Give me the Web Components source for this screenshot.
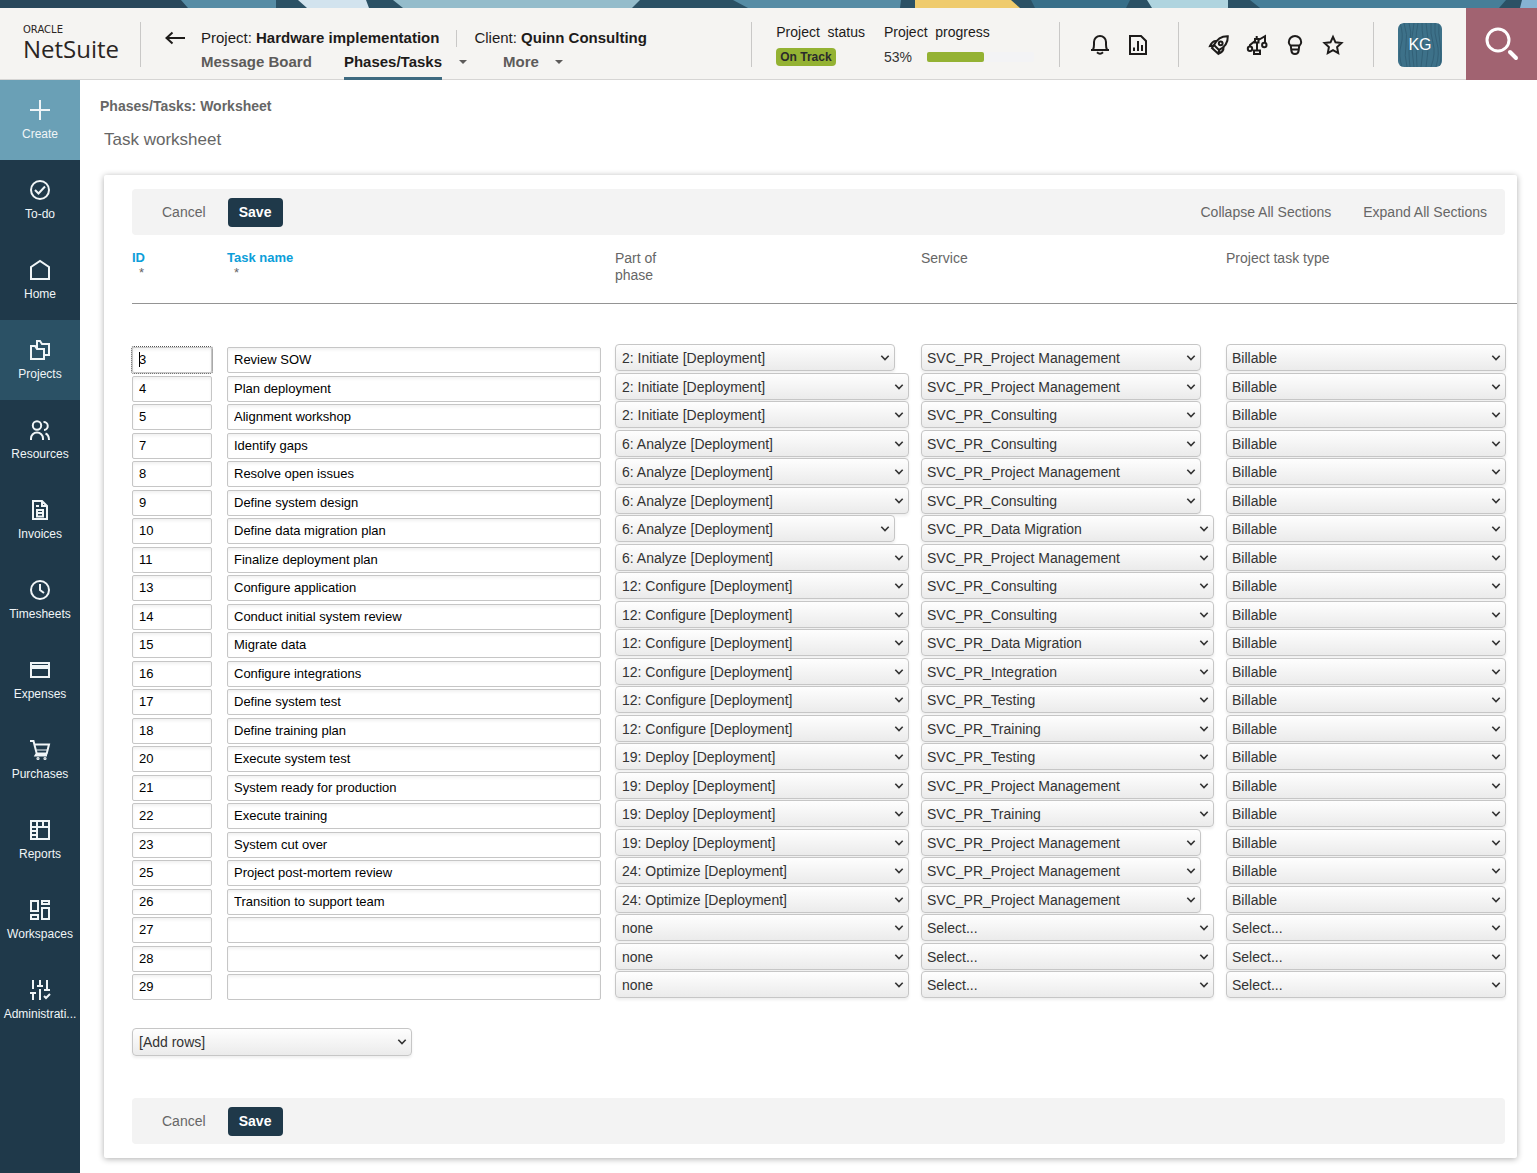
<!DOCTYPE html>
<html lang="en">
<head>
<meta charset="utf-8">
<meta name="viewport" content="width=device-width, initial-scale=1">
<title>Task worksheet</title>
<style>
  html, body { margin: 0; background: #fff; }
  body { font-family: "Liberation Sans", Arial, sans-serif; font-size: 14px; line-height: 17px; color: #666; }
</style>
</head>
<body>
<app-shell>
  <top-bar slot="header"></top-bar>
  <side-nav slot="nav"></side-nav>
  <worksheet-page></worksheet-page>
</app-shell>

<script>
const define = (name, html, setup) => {
  const template = document.createElement('template');
  template.innerHTML = html;
  customElements.define(name, class extends HTMLElement {
    connectedCallback() {
      if (this.shadowRoot) return;
      const root = this.attachShadow({ mode: 'open' });
      root.append(template.content.cloneNode(true));
      if (setup) setup(this, root);
    }
  });
};

const ICONS = {
  plus: '<path d="M10 0v20M0 10h20"/>',
  todo: '<circle cx="10" cy="10" r="9"/><path d="M5 10l3.500 3.500L15 6.500"/>',
  home: '<path d="M1 19V7l9-6 9 6v12z"/>',
  projects: '<path d="M1 19V6h4l2 3h7v10z"/><path d="M7 9V1h3l2 3h7v11h-5"/>',
  people: '<circle cx="7" cy="5.500" r="4.200"/><path d="M1 20v-1.500a6 6 0 0 1 12 0V20M13.500 2a4 4 0 0 1 .5 8M15.500 13.500c2.500 1 3.500 3 3.500 6.500"/>',
  invoice: '<path d="M3 1h9l5 5v13H3zM12 1v5h5M7 10h6v6.500H7zM7 13h6M6 6h3"/>',
  clock: '<circle cx="10" cy="10" r="9"/><path d="M10 4v6l4 3"/>',
  card: '<path d="M1 3h18v14H1z"/><path stroke-width="4" d="M1 7h18"/>',
  cart: '<path d="M0 1h3.500l3.200 12.500h10L19 4.500H5M6.700 13.500L5.500 15.500h11.500"/><path stroke-width="1" d="M6.500 10h11"/><circle cx="8" cy="18.500" r=".6"/><circle cx="15" cy="18.500" r=".6"/>',
  report: '<path d="M1 1h18v18H1zM1 7h18M7 1v18M13 1v6M1 11h6M1 15h6"/>',
  workspace: '<path d="M1 1h7v10H1zM12 1h7v3h-7zM1 15h7v4H1zM12 8h7v11h-7z"/>',
  sliders: '<path d="M3 0v9M10 0v6M17 0v10M7 6h6M14 10h6M0 13h6M3 13v7M10 9v11M14 16l2 2 4-4"/>',
  bell: '<path d="M1 15h18M3 14.500c1-1.500 1-3 1-5V7a6 6 0 0 1 12 0v2.500c0 2 0 3.500 1 5M7 17.300q3 3 6 0"/>',
  chart: '<path d="M2 1h11l5 5v13H2zM6 12.500V16M10 6v10M14 10v6"/>',
  rocket: '<path d="M18.800 1.200C13 1 8 4 5 10l5 5c6-3 9-8 8.800-13.800z"/><circle cx="11.700" cy="8.300" r="1.900"/><path d="M8 6C4.500 5.500 2.500 7.500 1 11l4-.5M5 10l-2 3 6 5.500 1.500-3.500M14.500 12c.3 3-1.500 5.500-5.500 7"/>',
  flow: '<path d="M7 15.500h6V19H7zM10 15V8M8 4h3.500v3.500H8zM9.700 1v3M3 11.500V10l5-4M11.500 5L18 1.200V7.500"/><circle cx="3" cy="13.700" r="2.200"/><circle cx="17.300" cy="10" r="2.200"/>',
  bulb: '<path d="M3.800 7.200a6.200 6.200 0 0 1 12.400 0c0 1.600-.8 2.600-2 3.800l-.6 4.800c-.3 2.200-1.600 3.200-3.600 3.200s-3.300-1-3.600-3.200L5.800 11c-1.200-1.200-2-2.200-2-3.800zM5.500 10.500h9M6.500 14.500h7"/>',
  star: '<path d="M10 1.800l2.500 5.500 6 .7-4.400 4.100 1.100 6L10 15.200l-5.200 2.900 1.100-6L1.500 8l6-.7z"/>',
  back: '<path d="M20 10H1.500M7.500 4.500L1.500 10l6 5.500"/>'
};

/* 20px line icon, chosen with the name attribute */
define('ui-icon', `
<style>
  :host { display: block; width: 20px; height: 20px; flex: none; }
  svg { display: block; width: 100%; height: 100%; fill: none; stroke: currentColor; stroke-width: 2; overflow: visible; }
</style>
<svg viewBox="0 0 20 20" aria-hidden="true"></svg>`,
(host, root) => {
  root.querySelector('svg').innerHTML = ICONS[host.getAttribute('name')] || '';
});

define('app-shell', `
<style>
  :host { display: flex; flex-direction: column; min-height: 100vh; }
  .body { display: flex; flex: 1; }
  main { flex: 1; min-width: 0; }
</style>
<slot name="header"></slot>
<div class="body"><slot name="nav"></slot><main><slot></slot></main></div>`);

/* Decorative ribbon along the top edge */
define('top-ribbon', `
<style>:host, svg { display: block; width: 100%; height: 8px; }</style>
<svg viewBox="0 0 1537 8" preserveAspectRatio="none" aria-hidden="true">
  <path fill="#2b5165" d="M0 0h1537v8H0z"/>
  <path fill="#29475b" d="M0 0h181l7 8H0z"/>
  <path fill="#568ca5" d="M181 0h95v8h-88z"/>
  <path fill="#d2e3ee" d="M298 0h68l3 8h-62z"/>
  <path fill="#94bccb" d="M393 0h247l-8 8H403z"/>
  <path fill="#568ca5" d="M733 0h168l-1 8H748z"/>
  <path fill="#efcb6d" d="M915 0h96l9 8H915z"/>
  <path fill="#386f89" d="M1031 0h99l-4 8h-91z"/>
  <path fill="#afd4df" d="M1147 0h81v8h-76z"/>
  <path fill="#467e98" d="M1250 0h256l-7 8h-239z"/>
  <path fill="#86b3d3" d="M1522 0h15v8h-17z"/>
</svg>`);

define('brand-logo', `
<style>
  :host { display: block; color: #2a2523; }
  a { display: block; color: inherit; text-decoration: none; }
  .maker { display: block; font: 10px/8px "DejaVu Sans", sans-serif; }
  .name { display: block; font: 24px/30px "Open Sans", "Noto Sans", sans-serif; }
</style>
<a href="#home"><span class="maker">ORACLE</span><span class="name">NetSuite</span></a>`);

define('top-bar', `
<style>
  :host { display: block; color: #1d1b1a; }
  header { display: flex; align-items: center; height: 69px; padding-top: 2px; background: #f5f4f2; border-bottom: 1px solid #d6d5d4; }
  a { color: inherit; text-decoration: none; }
  button { border: 0; padding: 0; background: none; color: inherit; font: inherit; display: block; }
  brand-logo { width: 117px; padding-left: 23px; }
  .rule { width: 1px; height: 45px; background: #c9c8c7; flex: none; }
  .back { margin: 0 16px 14px 24px; }
  .context { flex: 1; min-width: 0; font-size: 15px; align-self: stretch; display: flex; flex-direction: column; white-space: nowrap; }
  .titles { display: flex; align-items: center; gap: 17px; padding-top: 18px; line-height: 20px; }
  .titles .rule { height: 17px; }
  nav { display: flex; flex: 1; font-weight: bold; color: #5d5b5a; line-height: 20px; margin-bottom: -1px; }
  nav a { padding-top: 4px; box-sizing: border-box; }
  nav a.on { color: #1d1b1a; border-bottom: 3px solid #3e6a80; margin-left: 32px; }
  nav button { width: 41px; height: 27px; display: grid; place-items: center; }
  nav button::before { content: ""; border: 4px solid transparent; border-top-color: #5d5b5a; border-bottom: 0; }
  nav a.more { margin-left: 20px; }
  .facts { display: flex; gap: 19px; padding: 13px 24px 0; align-self: flex-start; white-space: nowrap; }
  .facts h2 { margin: 0 0 7px; font-size: 14px; font-weight: normal; line-height: 18px; }
  .pill { display: block; width: fit-content; background: #94b233; color: #2b2b2b; border-radius: 4px; font-size: 12px; font-weight: bold; padding: 0 4px; line-height: 18px; }
  .progress { display: flex; align-items: center; gap: 15px; color: #333; line-height: 18px; }
  .track { width: 107px; height: 10px; background: #f3f3f5; border-radius: 2px; margin-right: 1px; }
  .track span { display: block; width: 53%; height: 100%; background: #94b233; border-radius: 2px; }
  .icons { display: flex; gap: 18px; padding: 0 30px; }
  .avatar { display: grid; width: 44px; height: 44px; border-radius: 6px; overflow: hidden; margin: 0 24px; color: #fff; font-size: 16px; }
  .avatar > * { grid-area: 1 / 1; }
  .avatar span { place-self: center; }
  .search { width: 71px; height: 72px; align-self: flex-start; margin-top: -2px; background: #a16371; flex: none; }
</style>
<top-ribbon></top-ribbon>
<header>
  <brand-logo></brand-logo>
  <div class="rule"></div>
  <button class="back" aria-label="Back"><ui-icon name="back"></ui-icon></button>
  <div class="context">
    <div class="titles">
      <span>Project: <b>Hardware implementation</b></span>
      <span class="rule"></span>
      <span>Client: <b>Quinn Consulting</b></span>
    </div>
    <nav aria-label="Project">
      <a href="#messages">Message Board</a>
      <a href="#tasks" class="on">Phases/Tasks</a>
      <button aria-label="Phases/Tasks menu"></button>
      <a href="#more" class="more">More</a>
      <button aria-label="More menu"></button>
    </nav>
  </div>
  <div class="rule"></div>
  <div class="facts">
    <div><h2>Project&nbsp; status</h2><span class="pill">On Track</span></div>
    <div><h2>Project&nbsp; progress</h2><div class="progress">53%<div class="track"><span></span></div></div></div>
  </div>
  <div class="rule"></div>
  <div class="icons">
    <button aria-label="Notifications"><ui-icon name="bell"></ui-icon></button>
    <button aria-label="Reports"><ui-icon name="chart"></ui-icon></button>
  </div>
  <div class="rule"></div>
  <div class="icons">
    <button aria-label="Getting started"><ui-icon name="rocket"></ui-icon></button>
    <button aria-label="Integrations"><ui-icon name="flow"></ui-icon></button>
    <button aria-label="Tips"><ui-icon name="bulb"></ui-icon></button>
    <button aria-label="Favorites"><ui-icon name="star"></ui-icon></button>
  </div>
  <div class="rule"></div>
  <button class="avatar" aria-label="Account KG">
    <svg width="44" height="44" viewBox="0 0 44 44" fill="none" stroke="#326077" aria-hidden="true">
      <path fill="#3d7189" stroke="none" d="M0 0h44v44H0z"/>
      <path d="M2 0q4 12 1 22t1 22M6 0q4 12 2 22t1 22M11 0q3 9 1 18t0 26M16 0q-1 8-2 14t2 30M20 0q-2 10-2 16t1 28M24 0q0 8 1 14t-2 30M28 0q1 9 2 16t-2 28M33 0q-1 10 2 20t-2 24M37 0q-1 10 2 20t-1 24M41 0q-1 10 1 20t0 24"/>
    </svg>
    <span>KG</span>
  </button>
  <button class="search" aria-label="Search">
    <svg width="71" height="72" viewBox="0 0 71 72" fill="none" stroke="#fff" stroke-width="3" aria-hidden="true">
      <circle cx="32" cy="32" r="11"/><path stroke-width="4" stroke-linecap="round" d="M44 44l6 6"/>
    </svg>
  </button>
</header>`);

define('side-nav', `
<style>
  :host { display: block; width: 80px; flex: none; background: #1f394a; }
  a { display: flex; flex-direction: column; align-items: center; height: 60px; padding-top: 20px;
      color: #f0f5f7; text-decoration: none; font-size: 12px; line-height: 16px; white-space: nowrap; }
  ui-icon { margin-bottom: 6px; }
  a.create { background: #6aa0b6; }
  a.on { background: #2b5165; }
</style>
<nav aria-label="Main"></nav>`,
(host, root) => {
  const items = [['plus', 'Create', 'create'], ['todo', 'To-do'], ['home', 'Home'], ['projects', 'Projects', 'on'],
    ['people', 'Resources'], ['invoice', 'Invoices'], ['clock', 'Timesheets'], ['card', 'Expenses'],
    ['cart', 'Purchases'], ['report', 'Reports'], ['workspace', 'Workspaces'], ['sliders', 'Administrati...']];
  root.querySelector('nav').innerHTML = items.map(([icon, label, cls = '']) =>
    `<a href="#${icon}" class="${cls}"><ui-icon name="${icon}"></ui-icon>${label}</a>`).join('');
});

define('form-toolbar', `
<style>
  :host { display: flex; align-items: center; height: 46px; margin-right: 12px; background: #f3f3f3; border-radius: 4px; }
  button { border: 0; background: none; padding: 0; font: inherit; color: #666; }
  .cancel { margin: 0 22px 0 30px; }
  .save { width: 55px; height: 29px; background: #1f394a; color: #fff; font-weight: bold; border-radius: 4px; }
  .end { display: flex; gap: 32px; margin-left: auto; padding-right: 18px; }
</style>
<button class="cancel">Cancel</button><button class="save">Save</button>
<div class="end"><slot></slot></div>`);

/* Text box: attributes label, value, current */
define('form-input', `
<style>
  :host { display: block; }
  input { display: block; box-sizing: border-box; width: 100%; height: 26px; margin: 0; padding: 0 6px 2px; border: 1px solid #c6c6c6;
    border-radius: 2px; background: #fff; box-shadow: inset 0 2px 3px rgba(0,0,0,.06); font: inherit; font-size: 13px; color: #000; }
  :host([current]) input { outline: 1px dotted #555; background: linear-gradient(#000, #000) 6px 4px / 1px 15px no-repeat #fff; }
</style>
<input type="text">`,
(host, root) => {
  const input = root.querySelector('input');
  input.value = host.getAttribute('value') || '';
  input.setAttribute('aria-label', host.getAttribute('label'));
});

/* Drop-down: attributes label, value */
define('form-select', `
<style>
  :host { display: grid; height: 27px; --inset: 5px; }
  select, svg { grid-area: 1 / 1; }
  select { appearance: none; box-sizing: border-box; width: 100%; height: 100%; margin: 0; padding: 1px 24px 0 var(--inset); border: 1px solid #c6c6c6;
    border-radius: 4px; background: linear-gradient(#fefefe, #ebebeb); box-shadow: 0 2px 3px rgba(0,0,0,.07);
    font: inherit; color: #333; }
  svg { place-self: center end; width: 10px; height: 6px; margin-right: 5px; fill: none; stroke: #333; stroke-width: 1.600; pointer-events: none; z-index: 1; }
</style>
<select><option></option></select>
<svg viewBox="0 0 10 6" aria-hidden="true"><path d="M1.300 .8L5 4.600 8.700 .8"/></svg>`,
(host, root) => {
  root.querySelector('option').textContent = host.getAttribute('value');
  root.querySelector('select').setAttribute('aria-label', host.getAttribute('label'));
});

define('task-table', `
<style>
  :host { display: block; }
  table { width: 100%; table-layout: fixed; border-collapse: separate; border-spacing: 0; }
  th, td { padding: 0; vertical-align: top; text-align: left; font-weight: normal; }
  .c-id { width: 95px; } .c-phase { width: 306px; } .c-service { width: 305px; } .c-type { width: 291px; }
  th { height: 53px; padding-top: 15px; border-bottom: 1px solid #949494; }
  th.required { color: #0c9ed9; font-weight: bold; font-size: 13px; line-height: 15px; }
  th small { display: block; padding-left: 7px; font-size: 13px; font-weight: normal; color: #666; }
  .gap td { height: 40px; }
  .rows tr { height: 29px; }
  .rows tr:nth-child(even) { height: 28px; }
  .rows td:nth-child(-n+2) { padding-top: 3px; padding-right: 14px; }
  .rows td:first-child { padding-right: 15px; }
  .rows td { height: inherit; box-sizing: border-box; }
  form-select { width: 280px; }
  form-select.wide { width: 293px; }
  td:nth-child(3) form-select { --inset: 6px; }
  td:nth-child(3) form-select.wide { width: 294px; }
  .rows form-input { height: 25px; }
</style>
<table>
  <colgroup><col class="c-id"><col><col class="c-phase"><col class="c-service"><col class="c-type"></colgroup>
  <thead><tr>
    <th class="required">ID<small>*</small></th><th class="required">Task name<small>*</small></th>
    <th>Part of<br>phase</th><th>Service</th><th>Project task type</th>
  </tr></thead>
  <tbody class="gap"><tr><td colspan="5"></td></tr></tbody>
  <tbody class="rows"></tbody>
</table>`,
(host, root) => {
  const I = '2: Initiate [Deployment]', A = '6: Analyze [Deployment]', C = '12: Configure [Deployment]',
    D = '19: Deploy [Deployment]', O = '24: Optimize [Deployment]';
  const PM = 'Project Management', CO = 'Consulting', DM = 'Data Migration', IN = 'Integration', TE = 'Testing', TR = 'Training';
  const tasks = [
    [3, 'Review SOW', I, PM], [4, 'Plan deployment', I, PM], [5, 'Alignment workshop', I, CO],
    [7, 'Identify gaps', A, CO], [8, 'Resolve open issues', A, PM], [9, 'Define system design', A, CO],
    [10, 'Define data migration plan', A, DM], [11, 'Finalize deployment plan', A, PM],
    [13, 'Configure application', C, CO], [14, 'Conduct initial system review', C, CO],
    [15, 'Migrate data', C, DM], [16, 'Configure integrations', C, IN], [17, 'Define system test', C, TE],
    [18, 'Define training plan', C, TR], [20, 'Execute system test', D, TE],
    [21, 'System ready for production', D, PM], [22, 'Execute training', D, TR], [23, 'System cut over', D, PM],
    [25, 'Project post-mortem review', O, PM], [26, 'Transition to support team', O, PM],
    [27, '', 'none', ''], [28, '', 'none', ''], [29, '', 'none', '']
  ];
  const narrowPhase = [3, 10], narrowService = [3, 4, 5, 7, 8, 9, 23, 25, 26];
  root.querySelector('.rows').innerHTML = tasks.map(([id, name, phase, service], i) => `<tr>
    <td><form-input label="ID" value="${id}" ${i ? '' : 'current'}></form-input></td>
    <td><form-input label="Task name" value="${name}"></form-input></td>
    <td><form-select class="${narrowPhase.includes(id) ? '' : 'wide'}" label="Part of phase" value="${phase}"></form-select></td>
    <td><form-select class="${narrowService.includes(id) ? '' : 'wide'}" label="Service" value="${service ? 'SVC_PR_' + service : 'Select...'}"></form-select></td>
    <td><form-select label="Project task type" value="${service ? 'Billable' : 'Select...'}"></form-select></td>
  </tr>`).join('');
});

define('worksheet-page', `
<style>
  :host { display: block; padding: 16px 20px 15px 24px; }
  h1, h2 { margin: 0; line-height: 20px; }
  h1 { font-size: 14px; margin-left: -4px; }
  h2 { font-size: 17px; font-weight: normal; padding: 14px 0 25px; }
  .card { background: #fff; border-radius: 2px; padding: 14px 0 14px 28px; box-shadow: 0 1px 6px rgba(0,0,0,.32); }
  .card a { color: #666; text-decoration: none; }
  .add { width: 280px; height: 28px; margin: 28px 0 42px; --inset: 6px; }
</style>
<h1>Phases/Tasks: Worksheet</h1>
<h2>Task worksheet</h2>
<section class="card">
  <form-toolbar><a href="#collapse">Collapse All Sections</a><a href="#expand">Expand All Sections</a></form-toolbar>
  <task-table></task-table>
  <form-select class="add" label="Add rows" value="[Add rows]"></form-select>
  <form-toolbar></form-toolbar>
</section>`);
</script>
</body>
</html>
